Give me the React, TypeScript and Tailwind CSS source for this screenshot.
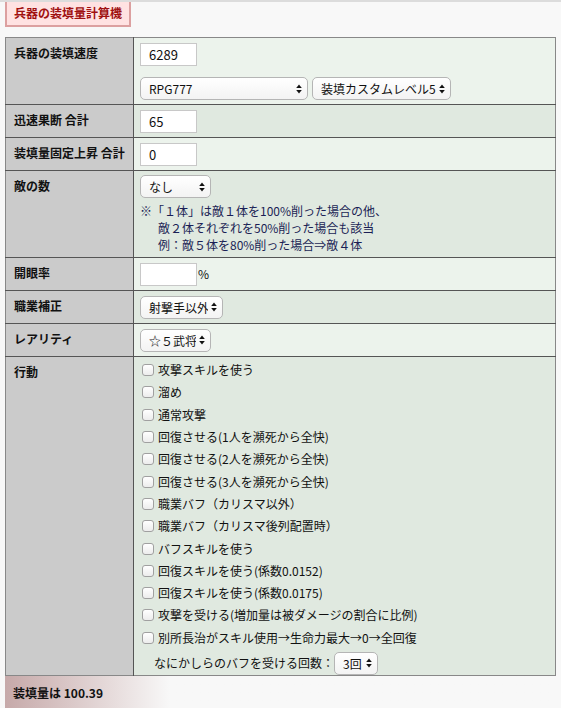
import React from "react";

const font = { fontFamily: '"Noto Sans CJK JP", "Noto Sans", sans-serif' };

function Arrows() {
  return (
    <svg width="6" height="10" viewBox="0 0 6 10" className="pointer-events-none absolute right-[6px] top-1/2 -translate-y-1/2">
      <path d="M3 0.5 L5.8 4 L0.2 4 Z" fill="#111" />
      <path d="M3 9.5 L5.8 6 L0.2 6 Z" fill="#111" />
    </svg>
  );
}

function Sel({ value, w }: { value: string; w: string }) {
  return (
    <div className={`relative block h-[23px] shrink-0 ${w}`}>
      <select
        defaultValue={value}
        className="block h-[23px] w-full appearance-none rounded-[5px] border border-[#b5b5b5] bg-gradient-to-b from-white to-[#f3f3f3] pl-[8px] pr-[14px] text-[12px] leading-[21px] text-[#111] outline-none"
        style={font}
      >
        <option>{value}</option>
      </select>
      <Arrows />
    </div>
  );
}

function Num({ value }: { value: string }) {
  return (
    <input
      defaultValue={value}
      className="block h-[23px] w-[57px] shrink-0 border border-[#c8c8c8] bg-white px-[8px] text-[13px] leading-[21px] text-[#111] outline-none"
      style={font}
    />
  );
}

const actions = [
  "攻撃スキルを使う",
  "溜め",
  "通常攻撃",
  "回復させる(1人を瀕死から全快)",
  "回復させる(2人を瀕死から全快)",
  "回復させる(3人を瀕死から全快)",
  "職業バフ（カリスマ以外）",
  "職業バフ（カリスマ後列配置時）",
  "バフスキルを使う",
  "回復スキルを使う(係数0.0152)",
  "回復スキルを使う(係数0.0175)",
  "攻撃を受ける(増加量は被ダメージの割合に比例)",
  "別所長治がスキル使用→生命力最大→0→全回復",
];

function Label({ children }: { children: React.ReactNode }) {
  return (
    <td className="w-[128px] border-r border-[#555] bg-[#cbcbcb] px-[8px] pt-[6px] align-top text-[12px] font-bold leading-[18px] text-[#111]">
      {children}
    </td>
  );
}

export default function App() {
  return (
    <div className="min-h-[708px] border-t-2 border-[#dcdcdc] bg-[#f8f8f8] leading-none text-[#111]" style={font}>
      <div className="ml-[5px] w-fit border-2 border-t-0 border-[#dca0a0] bg-[#ffe2e2] px-[7px] pb-[3px] pt-[2px] text-[12px] font-bold leading-[18px] text-[#a01010]">
        兵器の装填量計算機
      </div>

      <table className="ml-[5px] mt-[10px] w-[551px] border-collapse border border-[#888]">
        <tbody>
          <tr className="border-b border-[#555]">
            <Label>兵器の装填速度</Label>
            <td className="bg-[#ecf3ec] p-0 align-top">
              <div className="flex h-[66px] flex-col gap-[11px] px-[6px] pt-[5px]">
                <Num value="6289" />
                <div className="flex gap-[4px]">
                  <Sel value="RPG777" w="w-[168px]" />
                  <Sel value="装填カスタムレベル5" w="w-[139px]" />
                </div>
              </div>
            </td>
          </tr>
          <tr className="border-b border-[#555]">
            <Label>迅速果断 合計</Label>
            <td className="bg-[#e0e9e0] p-0 align-top">
              <div className="flex h-[32px] items-center px-[6px]">
                <Num value="65" />
              </div>
            </td>
          </tr>
          <tr className="border-b border-[#555]">
            <Label>装填量固定上昇 合計</Label>
            <td className="bg-[#ecf3ec] p-0 align-top">
              <div className="flex h-[32px] items-center px-[6px]">
                <Num value="0" />
              </div>
            </td>
          </tr>
          <tr className="border-b border-[#555]">
            <Label>敵の数</Label>
            <td className="bg-[#e0e9e0] p-0 align-top">
              <div className="flex h-[86px] flex-col px-[6px] pt-[4px]">
                <Sel value="なし" w="w-[71px]" />
                <div className="mt-[4px] text-[12px] leading-[17px] text-[#1b1f55]">
                  <div>※「１体」は敵１体を100%削った場合の他、</div>
                  <div className="pl-[18px]">敵２体それぞれを50%削った場合も該当</div>
                  <div className="pl-[18px]">例：敵５体を80%削った場合⇒敵４体</div>
                </div>
              </div>
            </td>
          </tr>
          <tr className="border-b border-[#555]">
            <Label>開眼率</Label>
            <td className="bg-[#ecf3ec] p-0 align-top">
              <div className="flex h-[32px] items-center px-[6px]">
                <Num value="" />
                <span className="ml-[1px] text-[12px]">%</span>
              </div>
            </td>
          </tr>
          <tr className="border-b border-[#555]">
            <Label>職業補正</Label>
            <td className="bg-[#e0e9e0] p-0 align-top">
              <div className="flex h-[32px] items-center px-[6px]">
                <Sel value="射撃手以外" w="w-[83px]" />
              </div>
            </td>
          </tr>
          <tr className="border-b border-[#555]">
            <Label>レアリティ</Label>
            <td className="bg-[#ecf3ec] p-0 align-top">
              <div className="flex h-[32px] items-center px-[6px]">
                <Sel value="☆５武将" w="w-[71px]" />
              </div>
            </td>
          </tr>
          <tr>
            <Label>行動</Label>
            <td className="bg-[#e0e9e0] p-0 align-top">
              <div className="flex h-[318px] flex-col px-[6px] pt-[2px]">
                {actions.map((a) => (
                  <label key={a} className="flex h-[22.3px] shrink-0 items-center text-[12px] leading-[18px] text-[#111]">
                    <input
                      type="checkbox"
                      className="ml-[2px] mr-[4px] h-[12px] w-[12px] appearance-none rounded-[3px] border border-[#a0a0a0] bg-gradient-to-b from-white to-[#ececec]"
                    />
                    {a}
                  </label>
                ))}
                <div className="mt-[3px] flex items-center pl-[14px] text-[12px]">
                  <span>なにかしらのバフを受ける回数：</span>
                  <Sel value="3回" w="w-[44px]" />
                </div>
              </div>
            </td>
          </tr>
        </tbody>
      </table>

      <div className="ml-[5px] h-[40px] w-[551px] bg-gradient-to-r from-[#c6a9a9] to-[#f8f8f8] to-[30%] px-[8px] pt-[8px] text-[12px] font-bold leading-[18px]">
        装填量は 100.39
      </div>
    </div>
  );
}
